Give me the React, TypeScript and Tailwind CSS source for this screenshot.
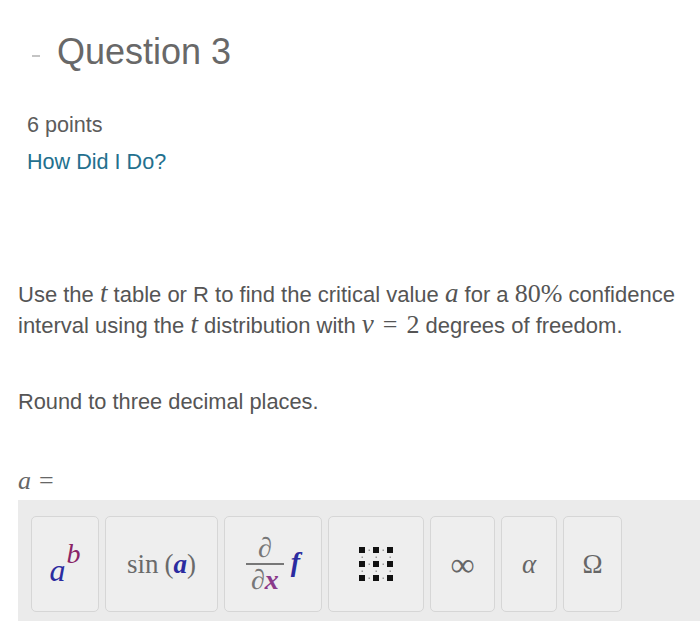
import React from "react";

const serif = "font-['Liberation_Serif','DejaVu_Serif',serif]";

function MatrixIcon() {
  const pts = [0, 1, 2];
  return (
    <svg width="40" height="40" viewBox="0 0 40 40">
      {pts.map((r) =>
        pts.map((c) => (
          <rect key={`s${r}${c}`} x={3 + c * 14} y={3 + r * 14} width="6" height="6" fill="#111" />
        ))
      )}
      {pts.map((r) =>
        [0, 1].map((c) => (
          <rect key={`h${r}${c}`} x={12.5 + c * 14} y={5.5 + r * 14} width="1.5" height="1.5" fill="#999" />
        ))
      )}
      {[0, 1].map((r) =>
        pts.map((c) => (
          <rect key={`v${r}${c}`} x={5.5 + c * 14} y={12.5 + r * 14} width="1.5" height="1.5" fill="#999" />
        ))
      )}
    </svg>
  );
}

function Btn({ w, children }: { w: string; children: React.ReactNode }) {
  return (
    <div
      className={`${w} h-[96px] shrink-0 rounded-[5px] border-[1.5px] border-[#d6d6d6] bg-[#eeeeee] flex items-center justify-center`}
    >
      {children}
    </div>
  );
}

export default function App() {
  return (
    <div className="w-[700px] h-[622px] bg-white overflow-hidden font-['Liberation_Sans',Arial,sans-serif]">
      <div className="flex items-center pl-[32px] pt-[34px]">
        <span className="w-[8px] h-[2px] bg-[#c4c4c4] relative top-[4px]" />
        <span className="ml-[17px] text-[36px] leading-[36px] text-[#686868]">Question 3</span>
      </div>
      <div className="pl-[27px] mt-[43px] text-[21.6px] leading-[24px] text-[#5c5c5c]">6 points</div>
      <div className="pl-[27px] mt-[13px] text-[21.6px] leading-[24px] text-[#23708e]">How Did I Do?</div>

      <div className="pl-[18px] mt-[105px] text-[22px] leading-[31px] text-[#555] whitespace-nowrap">
        <div>
          Use the <span className={`${serif} italic text-[27px] leading-[20px]`}>t</span> table or R to find the critical value{" "}
          <span className={`${serif} italic text-[27px] leading-[20px]`}>a</span> for a{" "}
          <span className={`${serif} text-[26px] leading-[20px]`}>80%</span> confidence
        </div>
        <div>
          interval using the <span className={`${serif} italic text-[27px] leading-[20px]`}>t</span> distribution with{" "}
          <span className={`${serif} italic text-[27px] leading-[20px]`}>ν</span>
          <span className={`${serif} text-[26px] leading-[20px] mx-[9px]`}>=</span>
          <span className={`${serif} text-[26px] leading-[20px]`}>2</span> degrees of freedom.
        </div>
      </div>

      <div className="pl-[18px] mt-[45px] text-[21.8px] leading-[31px] text-[#555]">Round to three decimal places.</div>

      <div className={`pl-[18px] mt-[48px] text-[26px] leading-[31px] text-[#666] ${serif}`}>
        <span className="italic">a</span>
        <span className="ml-[8px]">=</span>
      </div>

      <div className="ml-[18px] mt-[4px] h-[121px] bg-[#ebebeb] pl-[13px] pt-[16px] flex gap-[6px] items-start">
        <Btn w="w-[68px]">
          <span className={`${serif} italic text-[32px] text-[#2b2ba0] relative top-[6px]`}>a</span>
          <span className={`${serif} italic text-[28px] text-[#8a2466] relative -top-[10px] ml-[1px]`}>b</span>
        </Btn>
        <Btn w="w-[113px]">
          <span className={`${serif} text-[27px] text-[#6a6a6a]`}>
            sin<span className="ml-[6px]">(</span>
            <span className="italic font-bold text-[#2b2ba0]">a</span>)
          </span>
        </Btn>
        <Btn w="w-[98px]">
          <div className={`${serif} flex items-center gap-[7px]`}>
            <div className="flex flex-col items-center">
              <span className="text-[28px] leading-[24px] text-[#777] italic">∂</span>
              <span className="w-[38px] h-[1.5px] bg-[#777] my-[3px]" />
              <span className="text-[28px] leading-[24px] text-[#777]">
                <span className="italic">∂</span>
                <span className="italic font-bold text-[#8a3a8a]">x</span>
              </span>
            </div>
            <span className="italic font-bold text-[28px] text-[#2b2ba0] relative -top-[2px]">f</span>
          </div>
        </Btn>
        <Btn w="w-[96px]">
          <MatrixIcon />
        </Btn>
        <Btn w="w-[65px]">
          <span className={`${serif} text-[34px] text-[#666]`}>∞</span>
        </Btn>
        <Btn w="w-[56px]">
          <span className={`${serif} italic text-[27px] text-[#666]`}>α</span>
        </Btn>
        <Btn w="w-[59px]">
          <span className={`${serif} text-[27px] text-[#666]`}>Ω</span>
        </Btn>
      </div>
    </div>
  );
}
